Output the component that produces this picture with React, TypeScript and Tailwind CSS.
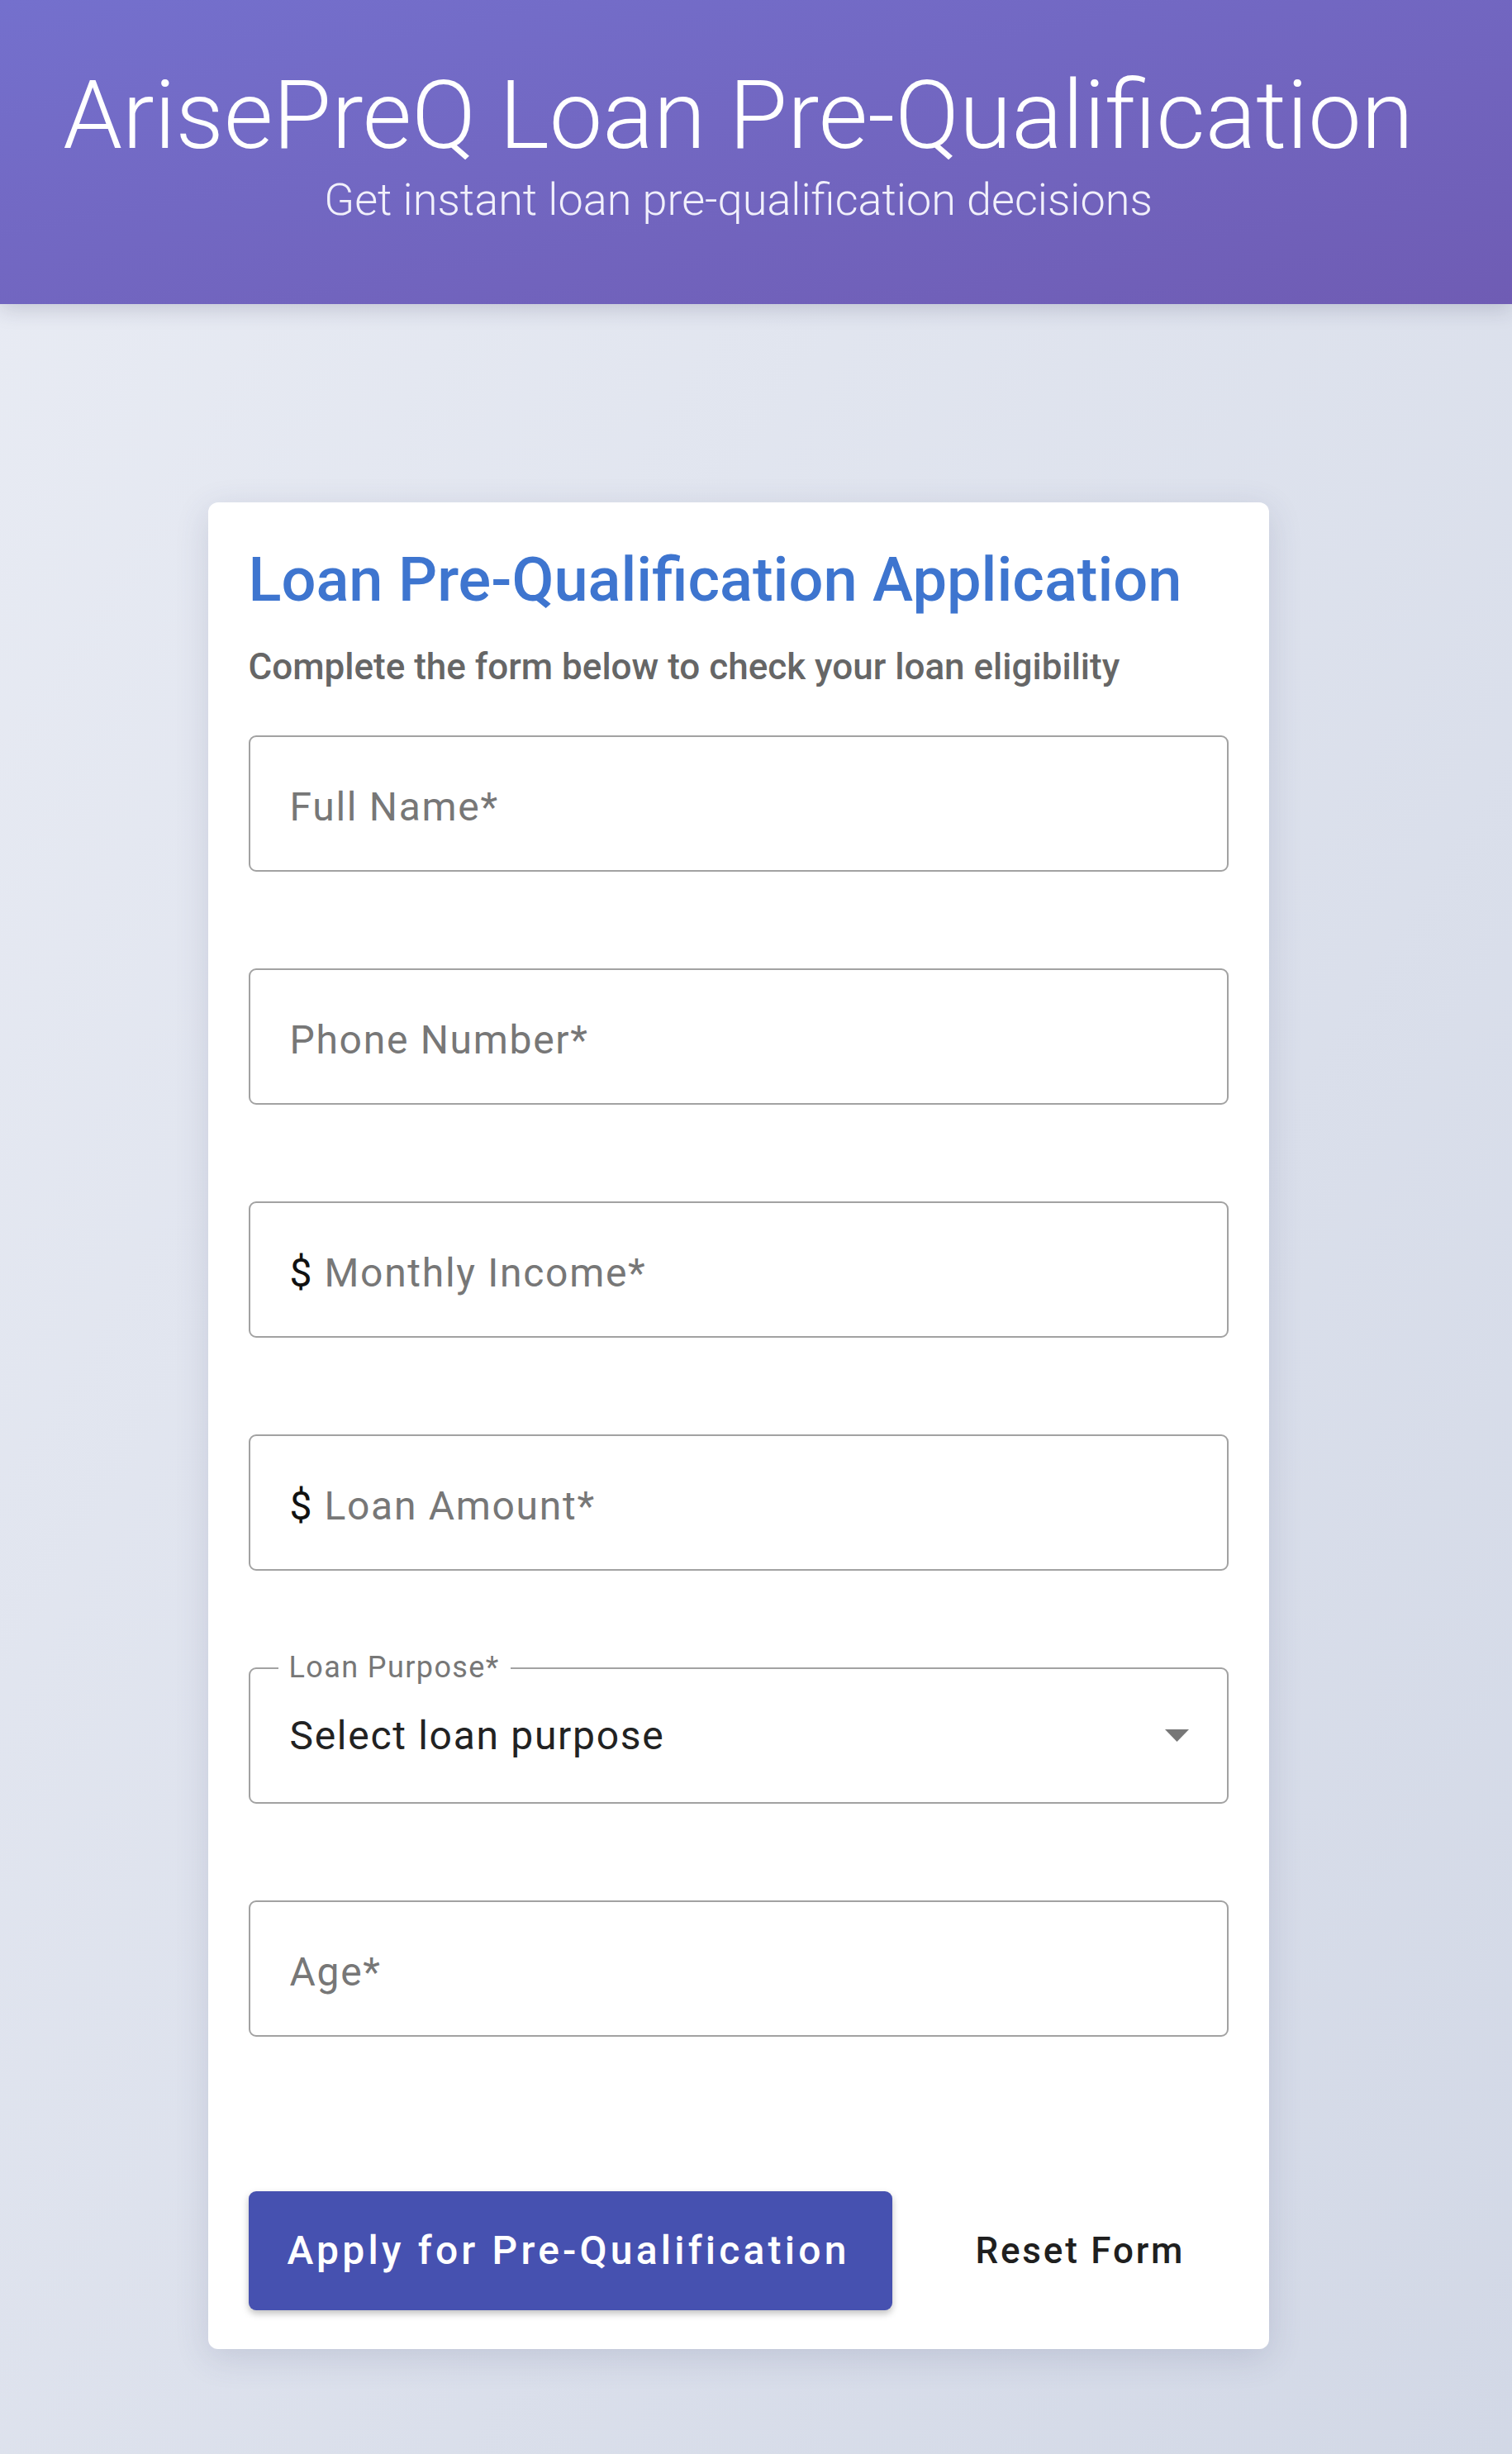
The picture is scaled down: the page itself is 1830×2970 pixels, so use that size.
import React from 'react';

type Field = {
  label: string;
  prefix?: string;
};

const fields: Field[] = [
  { label: 'Full Name*' },
  { label: 'Phone Number*' },
  { label: 'Monthly Income*', prefix: '$' },
  { label: 'Loan Amount*', prefix: '$' },
];

function TextBox({ label, prefix }: Field) {
  return (
    <div className="flex h-[165px] items-center rounded-[9px] border-2 border-[#a2a2a2] bg-white pl-[48px] pt-[8px]">
      {prefix && (
        <span className="mr-[15px] text-[48px] leading-[48px] text-[#111]">{prefix}</span>
      )}
      <span className="text-[48px] leading-[48px] tracking-[1.7px] text-[#777]">{label}</span>
    </div>
  );
}

function SelectBox() {
  return (
    <div className="relative flex h-[165px] items-center justify-between rounded-[9px] border-2 border-[#a2a2a2] bg-white pl-[48px] pr-[46px]">
      <span className="absolute left-[34px] top-[-20px] bg-white px-[13px] text-[36px] leading-[36px] tracking-[1.4px] text-[#777]">
        Loan Purpose*
      </span>
      <span className="text-[48px] leading-[48px] tracking-[1.7px] text-[#222]">
        Select loan purpose
      </span>
      <svg width="29" height="15" viewBox="0 0 29 15">
        <polygon points="0,0 29,0 14.5,15" fill="#777" />
      </svg>
    </div>
  );
}

export default function App() {
  return (
    <div className="min-h-[2970px] bg-gradient-to-br from-[#e9ecf4] to-[#d2d8e6] font-['Roboto',sans-serif]">
      <header className="relative h-[368px] bg-gradient-to-br from-[#7470cd] to-[#6f5cb4] shadow-[0_6px_24px_rgba(40,40,80,0.18)]">
        <div className="pr-[43px] pt-[70px] text-center text-white">
          <h1 className="text-[115px] font-light leading-[140px]">ArisePreQ Loan Pre-Qualification</h1>
          <p className="text-[54px] font-light leading-[64px] text-[#f1f0fb]">
            Get instant loan pre-qualification decisions
          </p>
        </div>
      </header>

      <main className="pr-[43px] pt-[240px]">
        <div className="mx-auto w-[1284px] rounded-[12px] bg-white px-[49px] pb-[47px] pt-[50px] shadow-[0_10px_40px_rgba(60,70,110,0.16)]">
          <h2 className="text-[74px] font-medium leading-[88px] text-[#3e75cf]">
            Loan Pre-Qualification Application
          </h2>
          <p className="mt-[36px] text-[44px] font-medium leading-[50px] text-[#666]">
            Complete the form below to check your loan eligibility
          </p>

          <div className="mt-[58px] flex flex-col gap-[117px]">
            {fields.map((f) => (
              <TextBox key={f.label} {...f} />
            ))}
            <SelectBox />
            <TextBox label="Age*" />
          </div>

          <div className="mt-[187px] flex items-center">
            <button
              type="button"
              className="h-[144px] w-[779px] shrink-0 whitespace-nowrap rounded-[9px] bg-[#4651b0] pl-[47px] text-left text-[48px] font-medium tracking-[4.2px] text-white shadow-[0_4px_8px_rgba(0,0,0,0.25)]"
            >
              Apply for Pre-Qualification
            </button>
            <button
              type="button"
              className="ml-[53px] h-[144px] shrink-0 whitespace-nowrap px-[48px] text-[44px] font-medium tracking-[2.8px] text-[#1f1f1f]"
            >
              Reset Form
            </button>
          </div>
        </div>
      </main>
    </div>
  );
}
